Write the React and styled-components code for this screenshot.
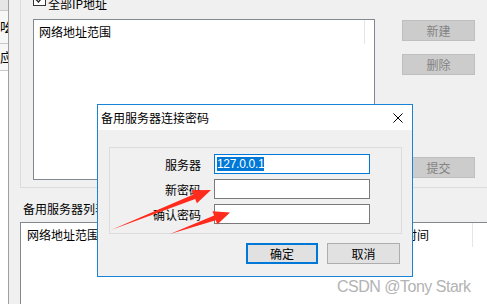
import React from "react";
import styled, { createGlobalStyle } from "styled-components";

const GlobalStyle = createGlobalStyle`
  html, body {
    margin: 0;
    padding: 0;
    background: #fff;
  }
  body {
    font-family: "Noto Sans CJK SC", "Noto Sans", sans-serif;
    font-size: 12px;
    color: #000;
  }
  * {
    box-sizing: border-box;
  }
`;

function App() {
  return (
    <>
      <GlobalStyle />
      <Screen>
        <SideStrip>
          <SideCell $h={11} $bg="#e6e6e6" />
          <SideCell $h={33}>吆</SideCell>
          <SideCell $h={27}>应</SideCell>
        </SideStrip>

        <Main>
          <GroupBox>
            <CheckRow>
              <CheckBox>
                <svg width="11" height="11" viewBox="0 0 11 11">
                  <path d="M2 5.5 L4.5 8 L9 2.5" fill="none" stroke="#222" strokeWidth="1.3" />
                </svg>
              </CheckBox>
              <CheckLabel>全部IP地址</CheckLabel>
            </CheckRow>
            <ContentRow>
              <ListBox $w={342} $h={161}>
                <ListHeader>
                  <HeaderCell $w={331} $pad={5}>网络地址范围</HeaderCell>
                </ListHeader>
              </ListBox>
              <ButtonCol>
                <SideButton $top={1}>新建</SideButton>
                <SideButton $top={13}>删除</SideButton>
                <SideButton $top={82}>提交</SideButton>
              </ButtonCol>
            </ContentRow>
          </GroupBox>

          <SectionLabel>备用服务器列表</SectionLabel>
          <BottomList>
            <ListHeader>
              <HeaderCell $w={240} $pad={6}>网络地址范围</HeaderCell>
              <HeaderCell $w={115} $pad={5}>服务器地址</HeaderCell>
              <HeaderCell $w={97} $pad={5}>修改时间</HeaderCell>
            </ListHeader>
          </BottomList>
        </Main>

        <Dialog>
          <TitleBar>
            <span>备用服务器连接密码</span>
            <svg width="10" height="10" viewBox="0 0 10 10">
              <path d="M0.5 0.5 L9.5 9.5 M9.5 0.5 L0.5 9.5" stroke="#000" strokeWidth="1" />
            </svg>
          </TitleBar>
          <DialogBody>
            <Frame>
              <FieldLabel>服务器</FieldLabel>
              <Field $focused>
                <Selected>127.0.0.1</Selected>
              </Field>
              <FieldLabel>新密码</FieldLabel>
              <Field />
              <FieldLabel>确认密码</FieldLabel>
              <Field />
            </Frame>
            <ButtonRow>
              <DialogButton $primary>确定</DialogButton>
              <DialogButton>取消</DialogButton>
            </ButtonRow>
          </DialogBody>
        </Dialog>

        <ArrowLayer width="487" height="304" viewBox="0 0 487 304">
          <polygon
            points="111,230 195.2,199 196.9,203.2 211,190 191.7,190.2 193.4,194.4"
            fill="#ff2b1c"
          />
          <polygon
            points="170,234 215.8,220.3 217.3,224.5 230,212.5 212.5,211.3 214.1,215.5"
            fill="#ff2b1c"
          />
        </ArrowLayer>

        <Watermark>CSDN @Tony Stark</Watermark>
      </Screen>
    </>
  );
}

export default App;

const Screen = styled.div`
  position: relative;
  display: flex;
  width: 487px;
  height: 304px;
  overflow: hidden;
  background: #f0f0f0;
`;

const SideStrip = styled.div`
  display: flex;
  flex-direction: column;
  flex: none;
  width: 9px;
  background: #fff;
  border-right: 1px solid #a0a0a0;
`;

const SideCell = styled.div`
  height: ${(p) => p.$h}px;
  line-height: ${(p) => p.$h - 1}px;
  background: ${(p) => p.$bg || "#f7f7f7"};
  border-bottom: 1px solid #c9c9c9;
  overflow: hidden;
  white-space: nowrap;
  font-size: 13px;
`;

const Main = styled.div`
  display: flex;
  flex-direction: column;
  flex: 1;
  min-width: 0;
`;

const GroupBox = styled.div`
  display: flex;
  flex-direction: column;
  flex: none;
  width: 480px;
  margin-left: 11px;
  padding: 0 0 7px 12px;
  border: 1px solid #dcdcdc;
  border-top: none;
`;

const CheckRow = styled.div`
  display: flex;
  align-items: flex-start;
  gap: 2px;
  margin-top: -7px;
`;

const CheckBox = styled.span`
  display: flex;
  align-items: center;
  justify-content: center;
  width: 13px;
  height: 13px;
  background: #fff;
  border: 1px solid #333;
`;

const CheckLabel = styled.span`
  margin-top: 3px;
  line-height: 16px;
`;

const ContentRow = styled.div`
  display: flex;
  margin-top: 7px;
`;

const ListBox = styled.div`
  width: ${(p) => p.$w}px;
  height: ${(p) => p.$h}px;
  background: #fff;
  border: 1px solid #828790;
`;

const ListHeader = styled.div`
  display: flex;
  height: 24px;
`;

const HeaderCell = styled.div`
  flex: none;
  width: ${(p) => p.$w}px;
  padding-left: ${(p) => p.$pad}px;
  line-height: 24px;
  white-space: nowrap;
  border-right: 1px solid #e5e5e5;
`;

const ButtonCol = styled.div`
  display: flex;
  flex-direction: column;
  margin-left: 27px;
`;

const SideButton = styled.div`
  width: 73px;
  height: 21px;
  margin-top: ${(p) => p.$top}px;
  line-height: 19px;
  text-align: center;
  color: #838383;
  background: #cccccc;
  border: 1px solid #bfbfbf;
`;

const SectionLabel = styled.div`
  margin: 13px 0 0 14px;
  line-height: 16px;
  white-space: nowrap;
`;

const BottomList = styled.div`
  flex: 1;
  width: 480px;
  margin: 5px 0 0 11px;
  background: #fff;
  border: 1px solid #828790;
  border-bottom: none;
`;

const Dialog = styled.div`
  position: absolute;
  left: 97px;
  top: 104px;
  display: flex;
  flex-direction: column;
  width: 316px;
  height: 173px;
  background: #f0f0f0;
  border: 1px solid #1883d7;
`;

const TitleBar = styled.div`
  display: flex;
  align-items: center;
  justify-content: space-between;
  height: 25px;
  padding: 0 9px 0 3px;
  background: #fff;
`;

const DialogBody = styled.div`
  display: flex;
  flex-direction: column;
  padding: 17px 0 0 11px;
`;

const Frame = styled.div`
  display: grid;
  grid-template-columns: 91px 156px;
  grid-auto-rows: 20px;
  align-content: start;
  column-gap: 13px;
  row-gap: 5px;
  width: 293px;
  height: 87px;
  padding-top: 6px;
  border: 1px solid #dcdcdc;
`;

const FieldLabel = styled.div`
  align-self: center;
  text-align: right;
  line-height: 20px;
  padding-top: 2px;
`;

const Field = styled.div`
  display: flex;
  align-items: center;
  padding-left: 2px;
  background: #fff;
  border: 1px solid ${(p) => (p.$focused ? "#0078d7" : "#7a7a7a")};
`;

const Selected = styled.span`
  line-height: 14px;
  color: #fff;
  background: #0078d7;
  font-family: "Liberation Sans", Arial, sans-serif;
  font-size: 12px;
  letter-spacing: -0.3px;
`;

const ButtonRow = styled.div`
  display: flex;
  gap: 9px;
  margin: 9px 0 0 137px;
`;

const DialogButton = styled.div`
  width: ${(p) => (p.$primary ? 72 : 73)}px;
  height: 21px;
  line-height: ${(p) => (p.$primary ? 17 : 19)}px;
  text-align: center;
  background: #e1e1e1;
  border: ${(p) => (p.$primary ? "2px solid #0078d7" : "1px solid #adadad")};
`;

const ArrowLayer = styled.svg`
  position: absolute;
  left: 0;
  top: 0;
  pointer-events: none;
`;

const Watermark = styled.div`
  position: absolute;
  left: 337px;
  top: 279px;
  line-height: 16px;
  font-family: "Liberation Sans", Arial, sans-serif;
  font-size: 16px;
  letter-spacing: -0.5px;
  color: #b3b3b3;
  white-space: nowrap;
`;
